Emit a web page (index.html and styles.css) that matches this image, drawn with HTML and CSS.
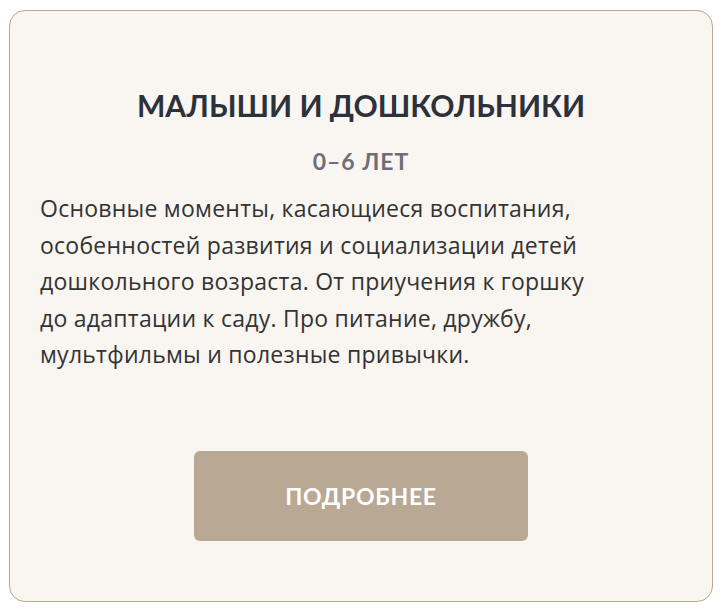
FILE: index.html
```html
<!DOCTYPE html>
<html lang="ru">
<head>
<meta charset="utf-8">
<title>Малыши и дошкольники</title>
<link rel="stylesheet" href="styles.css">
</head>
<body>
  <article class="age-card">
    <h2 class="age-card__title">МАЛЫШИ И ДОШКОЛЬНИКИ</h2>
    <p class="age-card__age">0–6 ЛЕТ</p>
    <p class="age-card__text">Основные моменты, касающиеся воспитания,<br>
особенностей развития и социализации детей<br>
дошкольного возраста. От приучения к горшку<br>
до адаптации к саду. Про питание, дружбу,<br>
мультфильмы и полезные привычки.</p>
    <a class="age-card__button" href="#">ПОДРОБНЕЕ</a>
  </article>
</body>
</html>
```

FILE: styles.css
```css
html, body {
  margin: 0;
  background: #ffffff;
}

body {
  padding: 10px 14px 13px 9px;
  font-family: Lato, "Noto Sans", "Open Sans", sans-serif;
}

.age-card {
  box-sizing: border-box;
  height: 592px;
  display: flex;
  flex-direction: column;
  align-items: center;
  padding: 76px 30px 60px;
  background: #f9f6f2;
  border: 1px solid #b9a994;
  border-radius: 16px;
}

.age-card__title {
  margin: 0;
  font-size: 30px;
  font-weight: 700;
  letter-spacing: 0;
  line-height: 36px;
  color: #2c313b;
}

.age-card__age {
  margin: 23px 0 0;
  font-size: 23px;
  font-weight: 700;
  letter-spacing: 1px;
  line-height: 30px;
  color: #6e6e78;
}

.age-card__text {
  align-self: stretch;
  margin: 14px 0 0;
  font-family: "Open Sans", Lato, sans-serif;
  font-size: 23px;
  letter-spacing: 0.25px;
  line-height: 36.6px;
  color: #333333;
}

.age-card__button {
  margin-top: auto;
  width: 334px;
  height: 90px;
  display: flex;
  align-items: center;
  justify-content: center;
  background: #b8a894;
  border-radius: 6px;
  color: #ffffff;
  font-size: 23px;
  font-weight: 700;
  letter-spacing: 0.7px;
  text-decoration: none;
}
```
